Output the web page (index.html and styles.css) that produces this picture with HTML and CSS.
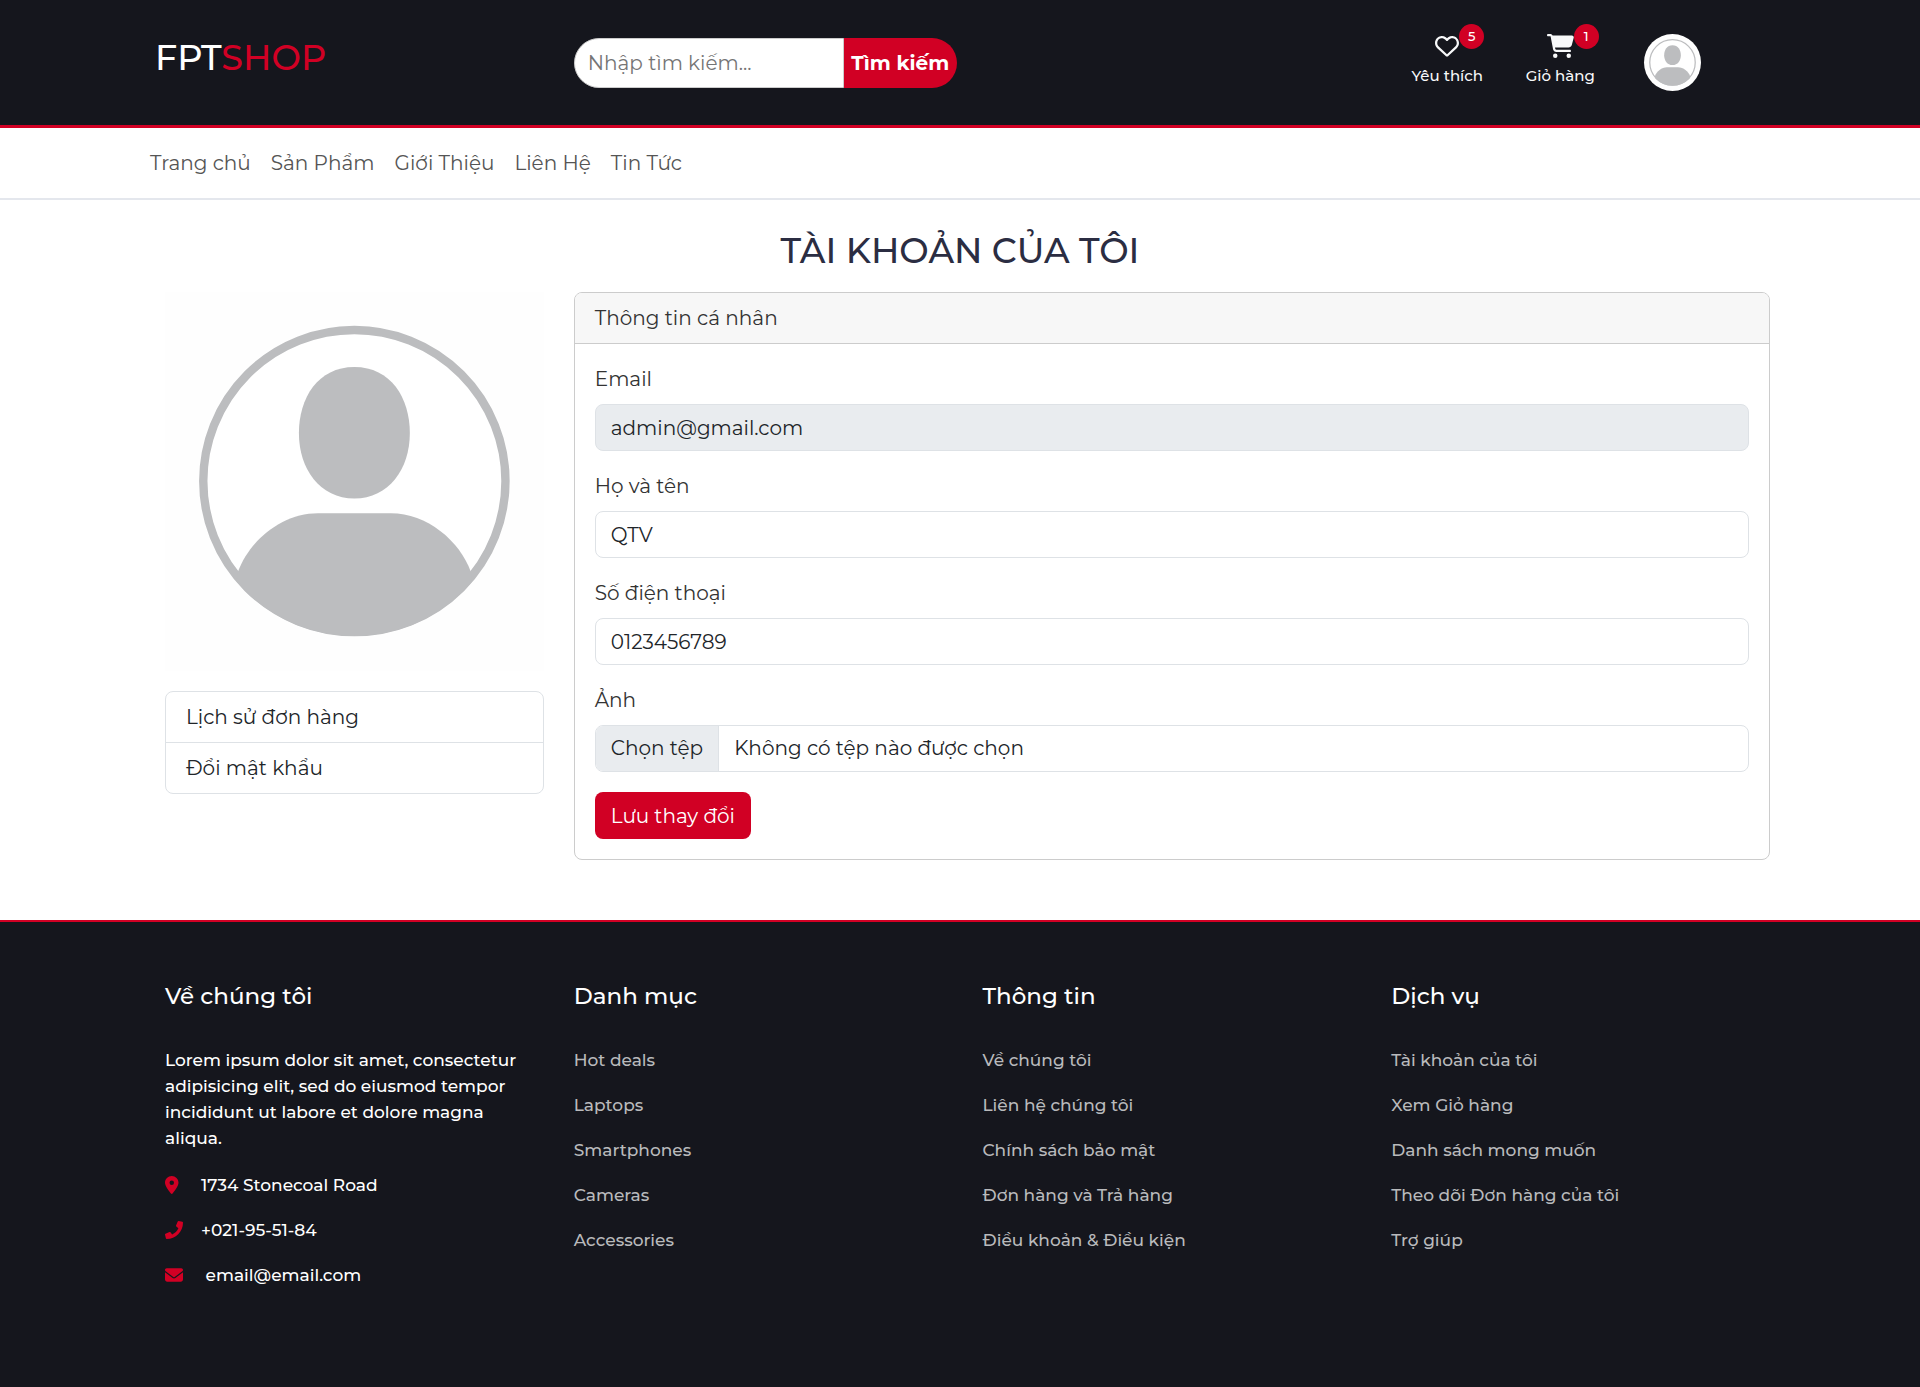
FILE: index.html
```html
<!DOCTYPE html>
<html lang="vi">
<head>
<meta charset="utf-8">
<meta name="viewport" content="width=device-width, initial-scale=1">
<title>Tài khoản của tôi - FPTSHOP</title>
<link rel="stylesheet" href="styles.css">
</head>
<body>
<svg class="sprite" aria-hidden="true">
  <symbol id="avatar" viewBox="0 0 379 379">
    <clipPath id="avatar-clip"><circle cx="189.5" cy="189.2" r="155"/></clipPath>
    <circle cx="189.5" cy="189.2" r="151.2" fill="#fff" stroke="#bcbdbf" stroke-width="8.4"/>
    <path fill="#bcbdbf" d="M189.500 75C226 75 245 106 245 141C245 177 224 206.600 189.500 206.600C155 206.600 134 177 134 141C134 106 153 75 189.500 75Z"/>
    <path clip-path="url(#avatar-clip)" fill="#bcbdbf" d="M153 221.400H226C262 221.400 295 249 306 280L320 379H59L73 280C84 249 117 221.400 153 221.400Z"/>
  </symbol>
</svg>

<header class="header">
  <div class="container grid">
    <a class="logo" href="#">FPT<span class="logo-accent">SHOP</span></a>
    <form class="search">
      <input class="search-input" type="text" placeholder="Nhập tìm kiếm..." aria-label="Nhập tìm kiếm">
      <button class="search-button" type="submit">Tìm kiếm</button>
    </form>
    <div class="tools">
      <a class="tool" href="#">
        <span class="tool-icon">
          <svg width="24" height="24" viewBox="0 0 512 512" fill="currentColor"><path d="M225.800 468.200l-2.500-2.300L48.100 303.200C17.400 274.700 0 234.700 0 192.800v-3.300c0-70.400 50-130.800 119.200-144C158.600 37.900 198.900 47 231 69.600c9 6.400 17.400 13.800 25 22.300c4.200-4.800 8.700-9.200 13.500-13.300c3.700-3.200 7.500-6.200 11.500-9c32.100-22.600 72.400-31.700 111.800-24.200C462 58.700 512 119.100 512 189.500v3.300c0 41.900-17.400 81.900-48.100 110.400L288.700 465.900l-2.500 2.300c-8.200 7.600-19 11.900-30.200 11.900s-22-4.200-30.200-11.900zM239.100 145c-.4-.3-.7-.7-1-1.100l-17.800-20c-23.100-25.900-58-37.700-92-31.200C81.600 101.500 48 142.100 48 189.500v3.300c0 28.500 11.900 55.800 32.800 75.200L256 430.700 431.200 268c20.900-19.400 32.800-46.700 32.800-75.200v-3.300c0-47.300-33.600-88-80.100-96.900c-34-6.500-69 5.400-92 31.200l-17.800 20c-.3.4-.7.7-1 1.100-4.500 4.500-10.600 7-16.900 7s-12.400-2.500-16.900-7z"/></svg>
          <span class="badge">5</span>
        </span>
        <span>Yêu thích</span>
      </a>
      <a class="tool" href="#">
        <span class="tool-icon">
          <svg width="27" height="24" viewBox="0 0 576 512" fill="currentColor"><path d="M0 24C0 10.700 10.700 0 24 0h45.500c22 0 41.500 12.800 50.600 32h411c26.300 0 45.500 25 38.600 50.400l-41 152.300c-8.500 31.400-37 53.300-69.500 53.300H170.700l5.400 28.500c2.200 11.300 12.100 19.500 23.600 19.500H488c13.300 0 24 10.700 24 24s-10.700 24-24 24H199.700c-34.600 0-64.300-24.600-70.700-58.500L77.400 54.500c-.7-3.800-4-6.500-7.900-6.500H24C10.700 48 0 37.300 0 24zM128 464a48 48 0 1 1 96 0 48 48 0 1 1-96 0zm336-48a48 48 0 1 1 0 96 48 48 0 1 1 0-96z"/></svg>
          <span class="badge">1</span>
        </span>
        <span>Giỏ hàng</span>
      </a>
      <a class="profile" href="#" aria-label="Tài khoản"><svg class="profile-image"><use href="#avatar"/></svg></a>
    </div>
  </div>
</header>

<nav class="nav">
  <div class="container nav-list">
    <a href="#">Trang chủ</a>
    <a href="#">Sản Phẩm</a>
    <a href="#">Giới Thiệu</a>
    <a href="#">Liên Hệ</a>
    <a href="#">Tin Tức</a>
  </div>
</nav>

<main class="main">
  <h1 class="title">TÀI KHOẢN CỦA TÔI</h1>
  <div class="container grid">
    <aside class="side">
      <svg class="photo" viewBox="0 0 379 379" role="img" aria-label="Ảnh đại diện"><use href="#avatar"/></svg>
      <div class="menu">
        <a class="menu-item" href="#">Lịch sử đơn hàng</a>
        <a class="menu-item" href="#">Đổi mật khẩu</a>
      </div>
    </aside>
    <section class="card">
      <h2 class="card-header">Thông tin cá nhân</h2>
      <form class="card-body">
        <div class="field">
          <label for="email">Email</label>
          <input class="control" id="email" type="email" value="admin@gmail.com" disabled>
        </div>
        <div class="field">
          <label for="name">Họ và tên</label>
          <input class="control" id="name" type="text" value="QTV">
        </div>
        <div class="field">
          <label for="phone">Số điện thoại</label>
          <input class="control" id="phone" type="text" value="0123456789">
        </div>
        <div class="field">
          <label for="photo">Ảnh</label>
          <div class="file">
            <input class="file-input" id="photo" type="file">
            <span class="file-button">Chọn tệp</span>
            <span class="file-name">Không có tệp nào được chọn</span>
          </div>
        </div>
        <button class="save" type="submit">Lưu thay đổi</button>
      </form>
    </section>
  </div>
</main>

<footer class="footer">
  <div class="container grid">
    <section>
      <h3 class="footer-title">Về chúng tôi</h3>
      <p class="about">Lorem ipsum dolor sit amet, consectetur adipisicing elit, sed do eiusmod tempor incididunt ut labore et dolore magna aliqua.</p>
      <ul class="links contacts">
        <li><a href="#"><svg class="contact-icon" viewBox="0 0 512 512"><path d="M215.700 499.200C267 435 384 279.400 384 192C384 86 298 0 192 0S0 86 0 192c0 87.400 117 243 168.300 307.200c12.300 15.300 35.100 15.300 47.400 0zM192 128a64 64 0 1 1 0 128 64 64 0 1 1 0-128z"/></svg>1734 Stonecoal Road</a></li>
        <li><a href="#"><svg class="contact-icon" viewBox="0 0 512 512"><path d="M493.400 24.600l-104-24c-11.300-2.600-22.900 3.300-27.500 13.900l-48 112c-4.200 9.800-1.400 21.300 6.900 28l60.600 49.600c-36 76.700-98.900 140.500-177.200 177.200l-49.600-60.600c-6.800-8.300-18.200-11.100-28-6.900l-112 48C3.900 366.500-2 378.100.6 389.400l24 104C27.100 504.200 36.700 512 48 512c256.100 0 464-207.500 464-464 0-11.200-7.700-20.900-18.600-23.400z"/></svg>+021-95-51-84</a></li>
        <li><a href="#"><svg class="contact-icon" viewBox="0 0 512 512"><path d="M48 64C21.500 64 0 85.500 0 112c0 15.100 7.100 29.300 19.200 38.400L236.800 313.600c11.400 8.500 27 8.500 38.400 0L492.800 150.400c12.100-9.100 19.200-23.300 19.200-38.400c0-26.500-21.500-48-48-48H48zM0 176V384c0 35.300 28.700 64 64 64H448c35.300 0 64-28.700 64-64V176L294.400 339.200c-22.800 17.100-54 17.100-76.800 0L0 176z"/></svg>&nbsp;email@email.com</a></li>
      </ul>
    </section>
    <section>
      <h3 class="footer-title">Danh mục</h3>
      <ul class="links">
        <li><a href="#">Hot deals</a></li>
        <li><a href="#">Laptops</a></li>
        <li><a href="#">Smartphones</a></li>
        <li><a href="#">Cameras</a></li>
        <li><a href="#">Accessories</a></li>
      </ul>
    </section>
    <section>
      <h3 class="footer-title">Thông tin</h3>
      <ul class="links">
        <li><a href="#">Về chúng tôi</a></li>
        <li><a href="#">Liên hệ chúng tôi</a></li>
        <li><a href="#">Chính sách bảo mật</a></li>
        <li><a href="#">Đơn hàng và Trả hàng</a></li>
        <li><a href="#">Điều khoản &amp; Điều kiện</a></li>
      </ul>
    </section>
    <section>
      <h3 class="footer-title">Dịch vụ</h3>
      <ul class="links">
        <li><a href="#">Tài khoản của tôi</a></li>
        <li><a href="#">Xem Giỏ hàng</a></li>
        <li><a href="#">Danh sách mong muốn</a></li>
        <li><a href="#">Theo dõi Đơn hàng của tôi</a></li>
        <li><a href="#">Trợ giúp</a></li>
      </ul>
    </section>
  </div>
</footer>
</body>
</html>
```
FILE: styles.css
```css
* {
  box-sizing: border-box;
}

body {
  display: flex;
  flex-direction: column;
  min-height: 100vh;
  margin: 0;
  background: #fff;
  color: #333;
  font: 400 20px/30px Montserrat, Inter, sans-serif;
}

a {
  color: inherit;
  text-decoration: none;
}

h1, h2, h3, p, ul {
  margin: 0;
  padding: 0;
  font-weight: inherit;
}

ul {
  list-style: none;
}

input, button {
  font: inherit;
}

.sprite {
  position: absolute;
  width: 0;
  height: 0;
}

.container {
  width: 100%;
  max-width: 1650px;
  margin: 0 auto;
  padding: 0 15px 0 30px;
}

.grid {
  display: grid;
  grid-template-columns: repeat(4, minmax(0, 1fr));
  column-gap: 30px;
}

/* Header */
.header {
  padding: 23px 0 34px;
  background: #15161d;
  border-bottom: 3px solid #d10024;
}

.logo {
  padding-top: 20px;
  margin-left: -10px;
  color: #fff;
  font-size: 35px;
  font-weight: 500;
}

.logo-accent {
  color: #d10024;
}

.search {
  display: flex;
  grid-column: 2 / 4;
  align-items: flex-start;
  padding-top: 15px;
}

.search-input {
  width: 270px;
  height: 50px;
  padding: 0 13px;
  border: 1px solid #ccc;
  border-radius: 25px 0 0 25px;
  background: #fff;
}

.search-input::placeholder {
  color: #757575;
}

.search-button {
  width: 113px;
  height: 50px;
  padding: 0;
  border: 0;
  border-radius: 0 25px 25px 0;
  background: #d10024;
  color: #fff;
  font-weight: 700;
}

.tools {
  display: flex;
  align-items: flex-start;
  gap: 43px;
  padding-left: 21px;
}

.tool {
  display: flex;
  flex-direction: column;
  align-items: center;
  width: 70px;
  padding-top: 11px;
  color: #f8f9fa;
  font-size: 15px;
  font-weight: 500;
  white-space: nowrap;
}

.tool-icon {
  position: relative;
  height: 27px;
}

.tool-icon svg {
  display: block;
}

.badge {
  position: absolute;
  top: -10px;
  left: 100%;
  width: 25px;
  height: 25px;
  border-radius: 50%;
  background: #d10024;
  color: #fff;
  font-size: 13px;
  line-height: 25px;
  text-align: center;
}

.profile {
  width: 57px;
  height: 57px;
  margin: 11px 0 0 6px;
  overflow: hidden;
  border-radius: 50%;
  background: #fefefe;
}

.profile-image {
  display: block;
  width: 57px;
  height: 57px;
}

/* Navigation */
.nav {
  padding: 20px 0;
  background: #fff;
  border-bottom: 2px solid #e4e7ed;
  color: #555;
}

.nav-list {
  display: flex;
  gap: 20px;
  padding-left: 15px;
}

/* Account */
.main {
  padding: 30px 0 60px;
}

.title {
  margin-bottom: 20px;
  color: #2b2d42;
  font-size: 35px;
  font-weight: 500;
  line-height: 42px;
  text-align: center;
}

.photo {
  display: block;
  width: 100%;
  margin-bottom: 20px;
  background: #fefefe;
}

.menu {
  border: 1px solid #dee2e6;
  border-radius: 8px;
  background: #fff;
  color: #212529;
}

.menu-item {
  display: block;
  padding: 10px 20px;
}

.menu-item + .menu-item {
  border-top: 1px solid #dee2e6;
}

.card {
  grid-column: 2 / 5;
  overflow: hidden;
  border: 1px solid #ccc;
  border-radius: 8px;
  background: #fff;
}

.card-header {
  padding: 10px 20px;
  border-bottom: 1px solid #ccc;
  background: #f7f7f7;
  font-size: 20px;
}

.card-body {
  padding: 20px;
}

.field {
  margin-bottom: 20px;
}

.field label {
  display: block;
  margin-bottom: 10px;
}

.control,
.file {
  display: flex;
  width: 100%;
  height: 47px;
  padding: 0 15px;
  border: 1px solid #dee2e6;
  border-radius: 8px;
  background: #fff;
  color: #212529;
}

.control:disabled {
  background: #e9ecef;
}

.file {
  position: relative;
  padding: 0;
  overflow: hidden;
  line-height: 45px;
}

.file-input {
  position: absolute;
  inset: 0;
  width: 100%;
  opacity: 0;
}

.file-button {
  padding: 0 15px;
  border-right: 1px solid #dee2e6;
  background: #e9ecef;
}

.file-name {
  padding: 0 15px;
}

.save {
  display: block;
  height: 47px;
  padding: 0 16px;
  border: 0;
  border-radius: 8px;
  background: #d10024;
  color: #fff;
}

/* Footer */
.footer {
  flex-grow: 1;
  padding: 59px 0;
  background: #15161d;
  border-top: 2px solid #d10024;
  color: #b9babc;
  font-size: 17px;
  font-weight: 500;
  line-height: 26px;
}

.footer-title {
  margin-bottom: 36px;
  color: #fff;
  font-size: 23px;
  line-height: 30px;
}

.about {
  margin-bottom: 21px;
  color: #fff;
}

.links {
  display: grid;
  gap: 19px;
}

.contacts {
  color: #fff;
}

.contacts a {
  display: flex;
  align-items: center;
  gap: 18px;
}

.contact-icon {
  width: 18px;
  height: 18px;
  fill: #d10024;
}
```
